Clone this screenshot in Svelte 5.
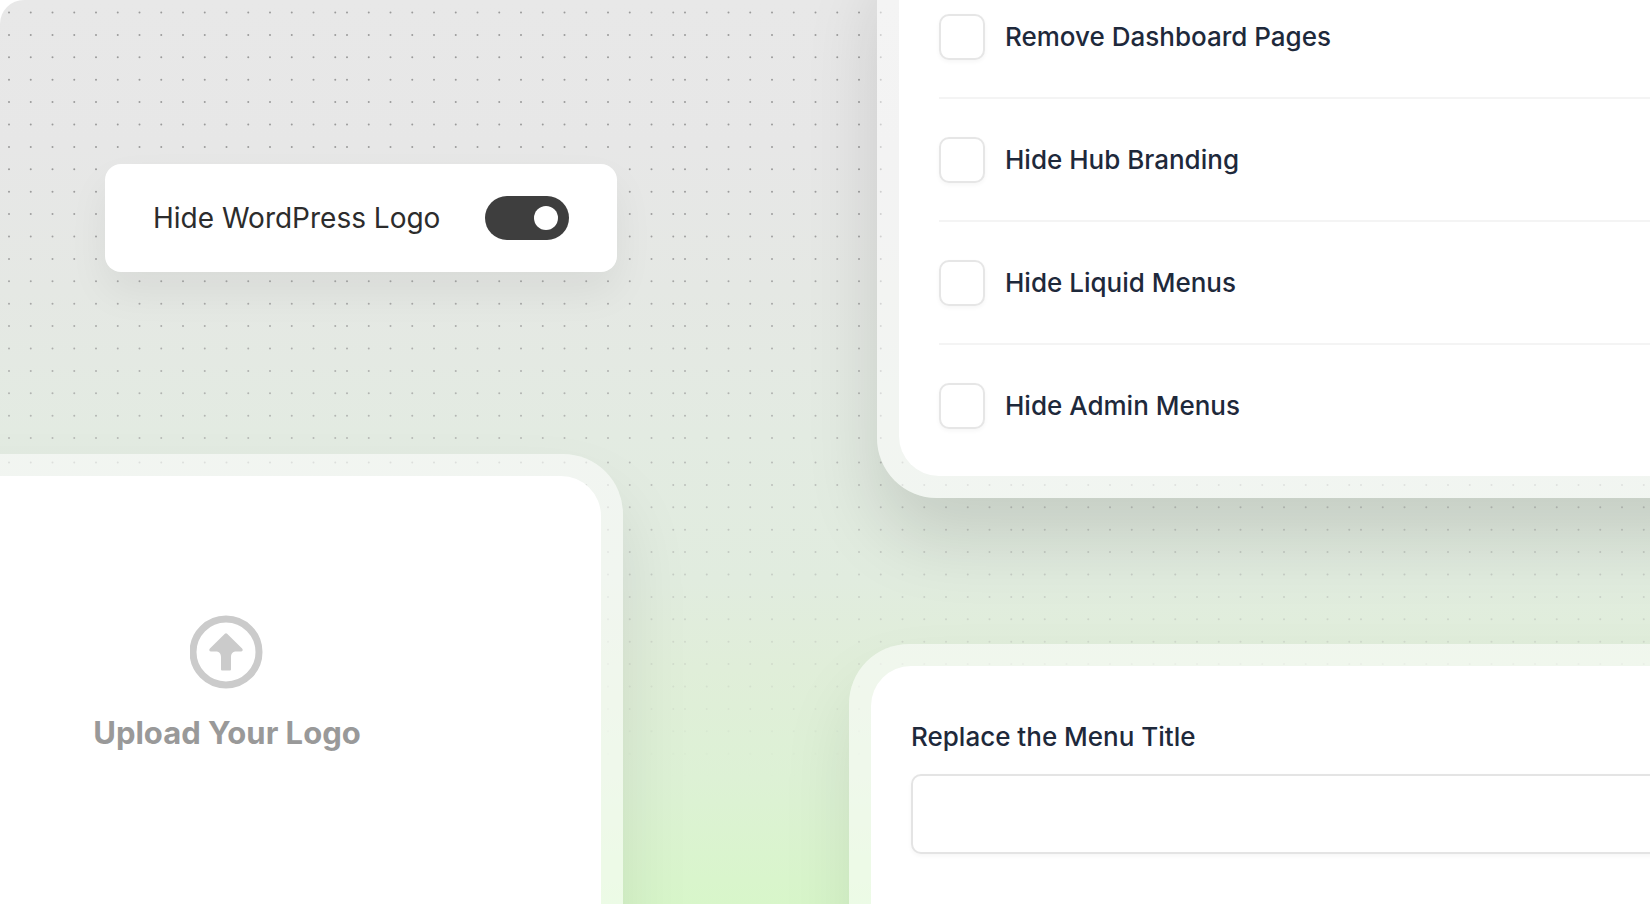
<script>
    const menuOptions = [
        { id: "dashboard-pages", label: "Remove Dashboard Pages" },
        { id: "hub-branding", label: "Hide Hub Branding" },
        { id: "liquid-menus", label: "Hide Liquid Menus" },
        { id: "admin-menus", label: "Hide Admin Menus" },
    ];

    // one dot tile is 16 x 20 dots
    const dots = [];
    for (let row = 0; row < 20; row++) {
        for (let col = 0; col < 16; col++) {
            dots.push({ x: 9 + col * 21.75, y: 12.5 + row * 22.4 });
        }
    }

    let checked = $state({});
    let hideLogo = $state(true);
    let menuTitle = $state("");
</script>

<main class="scene">
    <svg class="dots" aria-hidden="true">
        <defs>
            <pattern id="dot-tile" width="338" height="450" patternUnits="userSpaceOnUse">
                {#each dots as dot}
                    <circle cx={dot.x} cy={dot.y} r="1" />
                {/each}
            </pattern>
        </defs>
        <rect width="100%" height="100%" fill="url(#dot-tile)" />
    </svg>

    <div class="column">
        <label class="toggle-card">
            <span>Hide WordPress Logo</span>
            <input type="checkbox" role="switch" class="switch" bind:checked={hideLogo} />
        </label>

        <section class="frame upload-frame">
            <button type="button" class="panel upload">
                <svg width="74" height="74" viewBox="0 0 74 74" aria-hidden="true">
                    <circle cx="36" cy="37" r="33" fill="none" stroke="#cbcbcb" stroke-width="7" />
                    <path
                        d="M34.9 18.8a1.5 1.5 0 0 1 2.2 0l15 14.8c1.2 1.2.6 3-1.2 3h-4.200c-4 0-5.700 2-5.700 5.500v12.400a1 1 0 0 1-1 1h-8a1 1 0 0 1-1-1V42.100c0-3.500-1.700-5.500-5.700-5.500h-4.200c-1.800 0-2.400-1.800-1.200-3z"
                        fill="#cbcbcb"
                    />
                </svg>
                <span>Upload Your Logo</span>
            </button>
        </section>
    </div>

    <div class="column">
        <section class="frame menu-frame">
            <div class="panel menu-options">
                {#each menuOptions as option (option.id)}
                    <label class="option">
                        <input type="checkbox" bind:checked={checked[option.id]} />
                        <span>{option.label}</span>
                    </label>
                {/each}
            </div>
        </section>

        <section class="frame title-frame">
            <div class="panel title-form">
                <label for="menu-title">Replace the Menu Title</label>
                <input id="menu-title" type="text" bind:value={menuTitle} />
            </div>
        </section>
    </div>
</main>

<style>
    :global(body) {
        margin: 0;
        background: #fff;
        overflow: hidden;
    }

    .scene {
        position: relative;
        display: grid;
        grid-template-columns: 623px minmax(0, 1fr);
        column-gap: 226px;
        height: 100vh;
        overflow: hidden;
        border-top-left-radius: 24px;
        background: linear-gradient(
            180deg,
            #e8e8e8 0%,
            #e7e7e7 16%,
            #e5e8e4 32%,
            #e3ebe2 48%,
            #e1ecdf 64%,
            #e0eed9 74%,
            #ddf1d5 86%,
            #d8f6ca 100%
        );
        font-family: Inter, sans-serif;
    }

    .dots {
        position: absolute;
        inset: 0;
        width: 100%;
        height: 100%;
        fill: #9a9a9a;
        mask-image: linear-gradient(180deg, #000 0%, #000 20%, rgba(0, 0, 0, 0.6) 50%, transparent 86%);
    }

    .column {
        position: relative;
        display: flex;
        flex-direction: column;
        min-width: 0;
    }

    .toggle-card {
        display: flex;
        align-items: center;
        justify-content: space-between;
        margin: 164px 6px 0 105px;
        padding: 32px 48px;
        border-radius: 16px;
        background: #fff;
        box-shadow: 0 20px 40px rgba(0, 0, 0, 0.06);
        color: #2c2c2c;
        font-size: 28px;
        line-height: 44px;
        white-space: nowrap;
    }

    .switch {
        appearance: none;
        flex: none;
        display: flex;
        align-items: center;
        width: 84px;
        height: 44px;
        margin: 0;
        padding: 0 11px;
        border-radius: 22px;
        background: #b5b5b5;
        cursor: pointer;
    }

    .switch::before {
        content: "";
        width: 24px;
        height: 24px;
        border-radius: 50%;
        background: #fff;
    }

    .switch:checked {
        justify-content: flex-end;
        background: #3e3e3e;
    }

    .frame {
        display: flex;
        padding: 22px;
        border-radius: 60px;
        background: rgba(255, 255, 255, 0.52);
        box-shadow: 0 40px 72px rgba(0, 0, 0, 0.13);
    }

    .panel {
        flex: 1;
        border-radius: 40px;
        background: #fff;
    }

    /* the frames run off the edges of the scene */
    .upload-frame {
        margin: 182px 0 0 -169px;
        box-shadow: 0 40px 72px rgba(0, 0, 0, 0.09);
    }

    .menu-frame {
        margin: -66px -120px 0 28px;
    }

    .title-frame {
        margin: 146px -120px 0 0;
        box-shadow: 0 40px 72px rgba(0, 0, 0, 0.09);
    }

    .upload {
        display: flex;
        flex-direction: column;
        align-items: center;
        gap: 24px;
        padding: 139px 40px 240px;
        border: 0;
        color: #999;
        font: 700 31px/40px Inter, sans-serif;
        cursor: pointer;
    }

    .menu-options {
        padding: 20px 40px 10px;
    }

    .option {
        display: flex;
        align-items: center;
        gap: 20px;
        padding: 38px 0 37px;
        border-bottom: 2px solid #f4f4f4;
        color: #1e293b;
        font-size: 26px;
        font-weight: 500;
        line-height: 46px;
    }

    .option:last-child {
        border-bottom: 0;
    }

    .option input {
        appearance: none;
        flex: none;
        box-sizing: border-box;
        width: 46px;
        height: 46px;
        margin: 0;
        border: 2px solid #e6e6e6;
        border-radius: 10px;
        background: #fff;
        box-shadow: 0 2px 4px rgba(0, 0, 0, 0.04);
    }

    .option input:checked {
        background: #3e3e3e;
    }

    .title-form {
        display: flex;
        flex-direction: column;
        gap: 20px;
        padding: 54px 40px 120px;
    }

    .title-form label {
        color: #1e293b;
        font-size: 26px;
        font-weight: 500;
        line-height: 34px;
    }

    .title-form input {
        box-sizing: border-box;
        width: 100%;
        height: 80px;
        padding: 0 24px;
        border: 2px solid #e4e4e4;
        border-radius: 10px;
        background: #fff;
        box-shadow: 0 2px 4px rgba(0, 0, 0, 0.04);
        color: #1e293b;
        font: 400 26px/34px Inter, sans-serif;
    }
</style>
